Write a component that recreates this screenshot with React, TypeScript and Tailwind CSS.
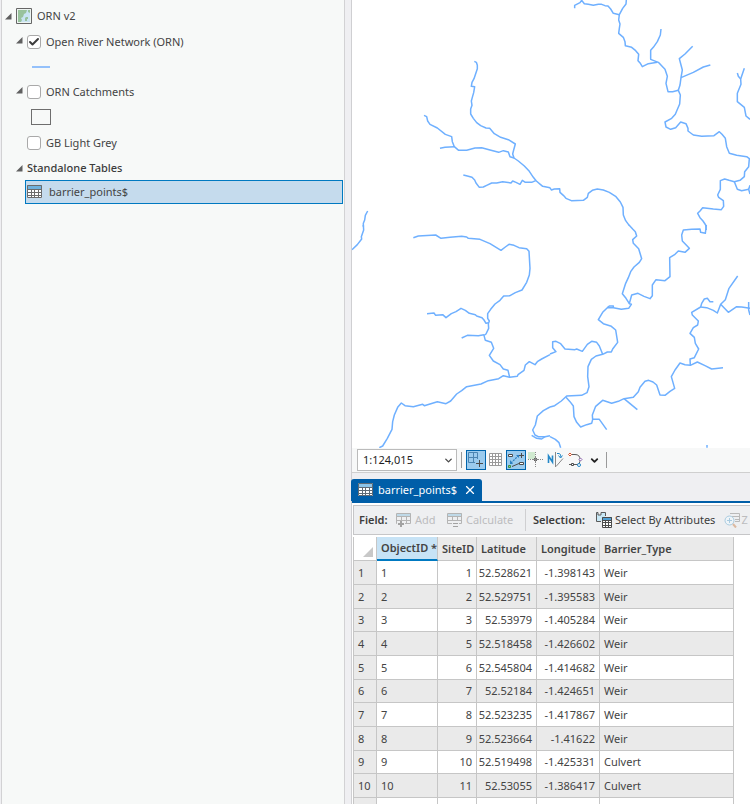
import React from "react";
import { Check, ChevronDown, X } from "lucide-react";
import clsx from "clsx";

type Barrier = {
  objectId: number;
  siteId: number;
  latitude: string;
  longitude: string;
  type: string;
};

const barriers: Barrier[] = [
  { objectId: 1, siteId: 1, latitude: "52.528621", longitude: "-1.398143", type: "Weir" },
  { objectId: 2, siteId: 2, latitude: "52.529751", longitude: "-1.395583", type: "Weir" },
  { objectId: 3, siteId: 3, latitude: "52.53979", longitude: "-1.405284", type: "Weir" },
  { objectId: 4, siteId: 5, latitude: "52.518458", longitude: "-1.426602", type: "Weir" },
  { objectId: 5, siteId: 6, latitude: "52.545804", longitude: "-1.414682", type: "Weir" },
  { objectId: 6, siteId: 7, latitude: "52.52184", longitude: "-1.424651", type: "Weir" },
  { objectId: 7, siteId: 8, latitude: "52.523235", longitude: "-1.417867", type: "Weir" },
  { objectId: 8, siteId: 9, latitude: "52.523664", longitude: "-1.41622", type: "Weir" },
  { objectId: 9, siteId: 10, latitude: "52.519498", longitude: "-1.425331", type: "Culvert" },
  { objectId: 10, siteId: 11, latitude: "52.53055", longitude: "-1.386417", type: "Culvert" },
];

// River lines, one entry per map tile
const tiles = [
  {
    origin: "translate(0 0)",
    lines: [
      "373,184 379,187 382,196 382,206 377,221 372,236 366,247 364,259 374,260 371,278 367,292 364,303 366,316 362,327 362,342 370,355 380,368 392,377 408,384 419,385 433,401 452,412 475,419 496,432 491,450 488,462 492,474 505,483 523,498 538,514 550,532 559,543 578,559 600,563",
      "222,346 230,350 233,363 240,373 262,384 286,403 305,410 307,425 313,440 326,451 350,451 375,444 395,443 420,450 446,457 460,452 475,456 480,470 492,474",
      "270,445 285,442 313,440",
      "340,525 352,528 366,532 374,540 378,549 388,562 400,561 410,556 425,549 440,549 458,545 483,549 488,543 498,547 510,553 517,541 526,547 545,547 557,542",
      "53,633 46,646 44,660 40,670 40,680",
    ],
  },
  {
    origin: "translate(600 0)",
    lines: [
      "0,563 4,570 13,567 29,566 30,577 40,586 48,595 64,602 100,601 112,592 115,580 127,571 142,567 160,570 178,577 198,590 211,606 219,622 220,645 227,662 238,677",
      "74,25 74,16 90,8 95,1 103,11 115,13 130,16 145,13 155,13 165,17 174,18 182,27 190,40 208,44",
      "229,0 228,12 218,25 208,44 206,60 210,72 208,85 206,100 220,112 225,125 226,137 245,142 257,152 266,163 264,182 271,190 277,200 295,191 322,187",
      "333,87 331,105 322,125 310,142 302,151 302,178 325,187 345,208 352,229 348,250 354,275 368,275 385,271",
      "428,139 405,162 388,176 393,195 397,210 393,233 390,255 385,271 391,285 389,312 380,333 376,343 365,355 345,366 348,381 362,388 377,383 392,366 408,371 414,385 414,393 430,405 455,409 492,407 508,395 516,403 526,415 530,440 538,460 560,466 590,470 598,476 596,500 584,515 583,530 570,541 553,545 537,541 524,537 511,542 511,568 503,585 506,592 520,602 521,619 514,629 490,627 458,623 450,633 443,640 450,653 459,663 467,675 469,690",
      "481,195 460,201 430,217 393,233",
      "583,205 572,237 573,253 562,280 562,305 583,322 588,348 600,358",
      "562,219 565,229 572,237",
      "553,545 562,568 575,572 596,568 600,582",
      "600,556 596,568",
    ],
  },
  {
    origin: "translate(0 675)",
    lines: [
      "40,0 41,15 34,35 35,42 22,59 6,74",
      "190,38 205,33 257,30 273,40 300,37 335,34 350,36 355,40 390,43 420,56 453,76 466,66 477,58 492,61 507,68 530,71 537,79 540,130 538,150 530,172 516,195 496,203 480,212 461,213 450,226 435,237 422,253 413,266 413,280 418,288 415,296 416,310 408,327 402,331 406,346 424,352 431,370 418,391 430,408 450,419 460,432 474,436 479,457",
      "231,266 252,264 257,271 278,269 288,278 304,266 318,260 333,250 346,256 358,265 376,269 380,273 396,278 402,285 408,295 416,293",
      "335,339 352,331 385,332 402,329",
      "88,668 98,663 112,640 126,613 128,590 133,570 143,547 154,534 165,542 190,545 218,538 223,542 262,530 288,536 302,528 320,507 335,497 350,485 393,477 415,467 446,461 460,452 479,457 502,454 504,449 522,436 526,420 538,410 555,419 562,410 575,402 600,389",
      "600,546 580,557 562,573 556,600 548,615 555,630 565,635 585,635 600,632",
      "545,631 560,640 575,642 585,635",
    ],
  },
  {
    origin: "translate(600 675)",
    lines: [
      "237,0 248,12 256,20 260,33 248,44 250,55 266,71 271,88 275,101 268,112 252,126 242,140 235,158 227,175 217,206 228,220 238,236 244,238 236,250 214,253 190,248 172,248 158,262 145,284 160,296 184,304 197,315 203,352 188,372 184,381 172,381 158,388 138,393 124,403 114,425 113,455 117,485 111,503 95,511 50,513 34,528 14,542 0,546",
      "172,248 178,243 190,243 190,248",
      "0,387 18,380 8,368 8,350 18,349 32,356 45,372 75,374 80,372 97,379 112,358 125,349 140,352 148,363 158,388",
      "469,0 466,25 452,22 450,12 425,13 400,15 395,30 397,48 418,70 405,82 385,78 375,88 359,98 360,155 345,167 318,164 307,180 307,212 300,221 282,214 264,205 245,210 238,236",
      "563,153 537,190 526,224 512,238 502,264 490,256 470,248 452,246 455,235 463,222 472,220 480,230 490,230",
      "452,246 425,262 427,270 445,288 443,300 430,308 420,325 433,337 436,355 446,372 433,398 420,402 421,421",
      "519,428 485,432 465,422 442,411 421,421 405,419 390,414 375,435 364,455 374,490 360,499 345,511 330,510 320,480 309,471 296,466 285,469 270,487 265,500 250,517 222,521 205,529 185,535 158,526 137,544 127,570 128,583 125,595 110,599 92,606 80,592 72,575 70,543 60,530 48,517",
      "128,583 148,583 170,614",
      "222,521 262,554",
      "512,238 535,262 560,245 575,246 600,250",
      "596,231 596,255 600,270",
      "0,635 16,643 27,653 32,668",
      "471,660 471,668",
    ],
  },
];

const RiverMap = () => (
  <div className="h-[448px] shrink-0 overflow-hidden bg-white">
    <svg viewBox="6 0 1194 1344" width="398" height="448" role="img" aria-label="River network map">
      <g fill="none" stroke="#6fb0ff" strokeWidth="4.5" strokeLinejoin="round">
        {tiles.map((tile) => (
          <g key={tile.origin} transform={tile.origin}>
            {tile.lines.map((points) => (
              <polyline key={points} points={points} />
            ))}
          </g>
        ))}
      </g>
    </svg>
  </div>
);

const TableIcon = ({ header = "#6fb1dc", line = "#6b6b6b" }) => (
  <svg width="16" height="14" viewBox="0 0 16 14" className="shrink-0" aria-hidden="true">
    <path fill="#fff" d="M0 0h15v13H0z" />
    <path fill={header} d="M0 0h15v4H0z" />
    <path fill="none" stroke={line} d="M.5.5h14v12H.5zM0 4.500h15M0 7.500h15M0 10.500h15M4.500 4v9M7.500 4v9M11.500 4v9" />
  </svg>
);

const Twisty = ({ label }: { label: string }) => (
  <button aria-label={label} className="shrink-0">
    <svg width="7" height="7" viewBox="0 0 7 7" aria-hidden="true">
      <path fill="#606060" d="M6.500 0v6.500H0z" />
    </svg>
  </button>
);

const LayerRow = ({ id, name, checked = false, expandable = false }: { id: string; name: string; checked?: boolean; expandable?: boolean }) => (
  <div className="flex h-[26px] items-center pl-[14px]">
    <span className="flex w-[11px] pb-1">{expandable && <Twisty label={`Collapse ${name}`} />}</span>
    <span className="relative flex">
      <input
        id={id}
        type="checkbox"
        defaultChecked={checked}
        className="peer size-[14px] appearance-none rounded-[3px] border border-[#a9a9a9] bg-white"
      />
      <Check size={12} strokeWidth={4} className="pointer-events-none absolute top-px left-px hidden text-[#3c3c3c] peer-checked:block" />
    </span>
    <label htmlFor={id} className="pl-[5px]">
      {name}
    </label>
  </div>
);

const Contents = () => (
  <aside className="w-[344px] shrink-0 border-x border-[#d2d2d4] bg-[#f7f9f8] pt-[3px] pr-px text-[11px] leading-4 whitespace-nowrap text-[#444]">
    <div className="flex h-[26px] items-center gap-1 pl-[3px]">
      <Twisty label="Collapse ORN v2" />
      <svg width="16" height="16" viewBox="0 0 16 16" aria-hidden="true">
        <path fill="#eef5f2" stroke="#666" d="M.5.5h15v15H.5z" />
        <path fill="#c9e4f3" d="M2 2h12v12H2z" />
        <path fill="#98c29c" d="M2 2h9l-1 3-2 1-1 3-2 1 1 2-1 2H2z" />
        <path fill="#98c29c" d="M10 9h2v2h-1v2H9v-3zM12 2h2v3l-2-1z" />
      </svg>
      <span className="pl-px">ORN v2</span>
    </div>
    <LayerRow id="layer-orn" name="Open River Network (ORN)" checked expandable />
    <div className="flex h-6 items-center pl-[30px]">
      <span className="h-0.5 w-[18px] bg-[#94c1fb]" />
    </div>
    <LayerRow id="layer-catchments" name="ORN Catchments" expandable />
    <div className="flex h-[25px] items-center pb-px pl-[29px]">
      <span className="h-4 w-5 border border-[#6e6e6e]" />
    </div>
    <LayerRow id="layer-grey" name="GB Light Grey" />
    <div className="flex h-6 items-center gap-1 pl-[14px] font-medium text-[#3c3c3c]">
      <Twisty label="Collapse Standalone Tables" />
      <span>Standalone Tables</span>
    </div>
    <div className="ml-[23px] flex h-6 items-center gap-[6px] border border-[#0079c1] bg-[#c5dbed] pl-px">
      <TableIcon />
      <span>barrier_points$</span>
    </div>
  </aside>
);

const MapBar = () => (
  <div className="flex h-[25px] shrink-0 items-center border-b border-[#cfcfcf] bg-[#f7f8f8] pl-[5px]">
    <div className="relative flex">
      <select aria-label="Map scale" className="h-[22px] w-[100px] appearance-none border border-[#bbb] bg-white pl-[5px] text-[11px] text-[#1f1f1f]">
        <option>1:124,015</option>
      </select>
      <ChevronDown size={11} strokeWidth={3} className="pointer-events-none absolute top-[6px] right-[3px] text-[#4a4a4a]" />
    </div>
    <span className="mx-1 h-4 border-l border-[#9a9a9a]" />
    <button aria-label="Selection" className="flex size-5 items-center justify-center border border-[#0065ad] bg-[#9bcbee]">
      <svg width="18" height="18" viewBox="0 0 18 18" aria-hidden="true">
        <path fill="none" stroke="#4b84b1" d="M1.500 1.500h9v10h-9zM6.500 1.500v10M1.500 6.500h9" />
        <path fill="#9bcbee" d="M8 8h9v9H8z" />
        <path fill="none" stroke="#4c4c4c" d="M12.500 9v7M9 12.500h7" />
      </svg>
    </button>
    <button aria-label="Grid" className="ml-[3px] flex">
      <svg width="14" height="14" viewBox="0 0 14 14" aria-hidden="true">
        <path fill="#fff" stroke="#999" d="M.5.5h12v12H.5zM.5 3.500h12M.5 6.500h12M.5 9.500h12M3.500.5v12M6.500.5v12M9.500.5v12" />
      </svg>
    </button>
    <button aria-label="Dynamic constraints" className="ml-[3px] flex size-5 items-center justify-center border border-[#0065ad] bg-[#9bcbee]">
      <svg width="18" height="18" viewBox="0 0 18 18" aria-hidden="true">
        <path fill="none" stroke="#2b7fc0" strokeWidth="1.200" strokeDasharray="2 1" d="m4 12 7-7" />
        <path fill="#2b7fc0" d="M12 4v3L9 4zM3 9v4h3z" />
        <path fill="#fff" stroke="#4c4c4c" d="M1.500 3.500h4v2h-4zM12.500 11.500h4v2h-4z" />
        <path fill="none" stroke="#4c4c4c" d="M14.500 2v5M12 4.500h5M5 15.500l7-3" />
        <path fill="#8fd18f" stroke="#3f8f46" d="M1.500 14.500h2v2h-2z" />
      </svg>
    </button>
    <button aria-label="Inference" className="ml-px flex">
      <svg width="18" height="18" viewBox="0 0 18 18" aria-hidden="true">
        <path fill="#cfe9cf" d="M1 1h7v7H1z" />
        <path fill="none" stroke="#888" strokeDasharray="1 1" d="M8.500 1v16M1 8.500h16" />
        <path fill="#666" d="M7 7h3v3H7z" />
        <path stroke="#888" d="M5 8.500h7M8.500 5v7" />
      </svg>
    </button>
    <button aria-label="Ground to grid" className="ml-[2px] flex">
      <svg width="18" height="18" viewBox="0 0 18 18" aria-hidden="true">
        <path fill="none" stroke="#2488c8" strokeWidth="1.600" d="M1.500 12V5l4 6V4.500" />
        <path fill="none" stroke="#888" d="M8.500 1v15M9 15.500l7-8" />
        <path fill="none" stroke="#2488c8" d="M10 2.500h2q2 0 2 4M11.500 4.500l2 2.500 2-2.500" />
      </svg>
    </button>
    <button aria-label="Snapping" className="ml-[2px] flex">
      <svg width="17" height="18" viewBox="0 0 17 18" aria-hidden="true">
        <path fill="none" stroke="#5c5c5c" d="M3 3.500h5q5 0 5 5t-3 5M2 13.500h9" />
        <path fill="#fff" stroke="#d8552e" d="m3 2 1.500 1.500L3 5 1.500 3.500z" />
        <path fill="#fff" stroke="#8d65b0" d="m13.500 7 1.500 1.500-1.500 1.500L12 8.500z" />
        <path fill="#fff" stroke="#4c4c4c" d="M4.500 12.500h2v2h-2z" />
        <circle cx="12" cy="14" r="1.500" fill="#fff" stroke="#2488c8" />
      </svg>
    </button>
    <button aria-label="Snapping options" className="ml-[5px]">
      <ChevronDown size={11} strokeWidth={4} className="text-[#222]" />
    </button>
    <span className="ml-[6px] h-4 border-l border-[#9a9a9a]" />
  </div>
);

const FieldBar = () => (
  <div className="flex h-[30px] items-center overflow-hidden border border-r-0 border-[#c6c6c8] bg-[#eeeff1] pl-[5px] text-[11px] whitespace-nowrap text-[#3c3c3c]">
    <span className="w-[37px] shrink-0 font-semibold">Field:</span>
    <button className="flex w-[51px] shrink-0 items-center gap-[3px] text-[#bcbcbe]">
      <svg width="16" height="16" viewBox="0 0 16 16" className="shrink-0" aria-hidden="true">
        <path fill="#bfd9e8" d="M1 1h14v3H1z" />
        <path fill="none" stroke="#b4b4b4" d="M.5 1.500h14v10H.5zM0 4.500h15M0 8.500h15M5.500 4v8M10.500 4v8" />
        <path fill="#eeeff1" d="M1 9h8v6H1z" />
        <path stroke="#a2a2a2" strokeWidth="2" d="M5 9v6M2 12h6" />
      </svg>
      Add
    </button>
    <button className="flex w-[78px] shrink-0 items-center gap-[3px] text-[#bcbcbe]">
      <svg width="16" height="16" viewBox="0 0 16 16" className="shrink-0" aria-hidden="true">
        <path fill="#bfd9e8" d="M1 1h14v3H1z" />
        <path fill="none" stroke="#b4b4b4" d="M.5 1.500h14v10H.5zM0 4.500h15M0 8.500h15M5.500 4v8M10.500 4v8" />
        <path fill="#eeeff1" d="M5 9h7v6H5z" />
        <path stroke="#a2a2a2" d="M6 11.500h5M6 14.500h5" />
      </svg>
      Calculate
    </button>
    <span className="h-[22px] border-l border-[#cfcfd1]" />
    <span className="ml-[7px] w-[63px] shrink-0 font-semibold">Selection:</span>
    <button className="flex shrink-0 items-center gap-[3px]">
      <svg width="16" height="16" viewBox="0 0 16 16" className="shrink-0" aria-hidden="true">
        <path fill="#c8e8f6" stroke="#5a5a5a" d="M5 9.500H.5V.5H2V3h3V.5h4.500V4" />
        <path fill="#fff" d="M6 6h10v9H6z" />
        <path fill="#4f9fd3" d="M6 5h10v3H6z" />
        <path fill="none" stroke="#4c4c4c" d="M6.500 5.500h9v10h-9zM6 8.500h10M6 10.500h10M6 13.500h10M9.500 8v8M12.500 8v8" />
      </svg>
      Select By Attributes
    </button>
    <button aria-label="Zoom to selection" className="ml-[9px] flex shrink-0 items-center text-[#bcbcbe]">
      <svg width="17" height="16" viewBox="0 0 17 16" className="shrink-0" aria-hidden="true">
        <path fill="none" stroke="#b9b9b9" d="M6 1.500h9.500v8H11M8 4.500h7M11 7.500h4" />
        <circle cx="5.500" cy="8.500" r="4.500" fill="#eef4f8" stroke="#a9cbe0" />
        <path stroke="#a9cbe0" d="M3 8.500h5M5.500 6v5" />
        <path stroke="#dcb9a0" strokeWidth="2" d="m9 12 3 3.500" />
      </svg>
      Z
    </button>
  </div>
);

const headCell = "border-r border-b border-[#c6c6c6] px-1 text-left font-semibold";
const cell = "border-r border-b border-[#c6c6c6]";

const AttributeTable = () => (
  <table className="w-[381px] table-fixed border-separate border-spacing-0 border-l border-[#c6c6c6] text-[11px] leading-4 whitespace-nowrap text-[#444]">
    <colgroup>
      <col className="w-[23px]" />
      <col className="w-[61px]" />
      <col className="w-[39px]" />
      <col className="w-[60px]" />
      <col className="w-[63px]" />
      <col />
    </colgroup>
    <thead>
      <tr className="h-6 bg-[#eaeaea]">
        <th scope="col" className="border-r border-b border-[#c6c6c6] bg-white p-0 align-bottom">
          <svg width="10" height="10" viewBox="0 0 10 10" className="mb-[3px] ml-[9px]" aria-label="Select all">
            <path fill="#c8c8c8" d="M10 0v10H0z" />
          </svg>
        </th>
        <th scope="col" className="border-r border-b-2 border-r-[#c6c6c6] border-b-[#0079c1] bg-[#c7e3f6] p-0 pl-1 text-left font-semibold">
          ObjectID *
        </th>
        <th scope="col" className={headCell}>SiteID</th>
        <th scope="col" className={headCell}>Latitude</th>
        <th scope="col" className={headCell}>Longitude</th>
        <th scope="col" className={headCell}>Barrier_Type</th>
      </tr>
    </thead>
    <tbody>
      {barriers.map((barrier, i) => (
        <tr key={barrier.objectId} className={clsx(i % 3 === 2 ? "h-[23px]" : "h-6", i % 2 ? "bg-[#eaeaea]" : "bg-white")}>
          <th scope="row" className={clsx(cell, "bg-[#eaeaea] pl-1 text-left font-normal")}>
            {barrier.objectId}
          </th>
          <td className={clsx(cell, "pl-1")}>{barrier.objectId}</td>
          <td className={clsx(cell, "pr-1 text-right")}>{barrier.siteId}</td>
          <td className={clsx(cell, "pr-1 text-right")}>{barrier.latitude}</td>
          <td className={clsx(cell, "pr-1 text-right")}>{barrier.longitude}</td>
          <td className={clsx(cell, "pl-1")}>{barrier.type}</td>
        </tr>
      ))}
      <tr className="h-6">
        <th scope="row" className={clsx(cell, "bg-[#eaeaea]")} />
        <td className={cell} />
        <td className={cell} />
        <td className={cell} />
        <td className={cell} />
        <td className={cell} />
      </tr>
    </tbody>
  </table>
);

const App = () => {
  return (
    <div className="flex h-screen overflow-hidden bg-[#efeff2] pl-px font-['Noto_Sans','Open_Sans',sans-serif]">
      <Contents />
      <main className="ml-[6px] flex min-w-0 flex-1 flex-col border-l border-[#cfcfd2]">
        <RiverMap />
        <MapBar />
        <div className="mt-[6px] flex shrink-0 border-b-2 border-[#005ea8]">
          <div className="-ml-px flex h-[22px] items-center rounded-t-[3px] bg-[#005ea8] pr-[5px] pl-[7px] text-[11px] text-white">
            <TableIcon line="#5f6b75" header="#8cc4e8" />
            <span className="pr-[6px] pl-1">barrier_points$</span>
            <button aria-label="Close table">
              <X size={14} strokeWidth={2} />
            </button>
          </div>
        </div>
        <div className="flex-1 bg-white pt-0.5 pl-px">
          <FieldBar />
          <div className="pt-0.5">
            <AttributeTable />
          </div>
        </div>
      </main>
    </div>
  );
};

export default App;
